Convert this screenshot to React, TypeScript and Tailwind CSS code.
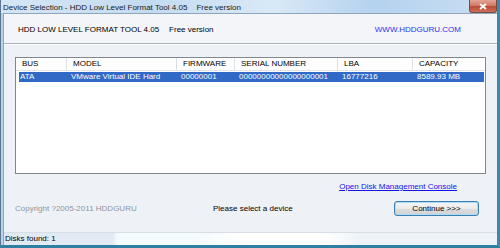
const columns = [
    { label: 'BUS', width: 'w-[51px]' },
    { label: 'MODEL', width: 'w-[110px]' },
    { label: 'FIRMWARE', width: 'w-[58px]' },
    { label: 'SERIAL NUMBER', width: 'w-[103px]' },
    { label: 'LBA', width: 'w-[75px]' },
    { label: 'CAPACITY', width: 'flex-1' },
];

const row = ['ATA', 'VMware Virtual IDE Hard', '00000001', '00000000000000000001', '16777216', '8589.93 MB'];

const App = () => {
    return (
        <div className="w-[500px] h-[248px] flex flex-col overflow-hidden bg-[#b9d3ec] border-l border-[#5d7690] border-r-[3px] border-r-[#3d88ad] border-b-[3px] border-b-[#2f7fa3] font-['Liberation_Sans',sans-serif] text-[8px] text-black leading-none">
            {/* title bar */}
            <div className="h-[13px] shrink-0 flex items-end relative bg-[linear-gradient(90deg,#d5e6f6_0%,#c3dbf1_30%,#d9e9f7_55%,#b5d2ee_75%,#c9dff3_100%)]">
                <span className="pl-[2px] pb-[1px] text-[8px] text-[#1a1a1a]">
                    Device Selection - HDD Low Level Format Tool 4.05
                    <span className="ml-[9px]">Free version</span>
                </span>
                <div className="absolute right-[0px] top-0 w-[28px] h-[13px] rounded-b-[3px] border border-t-0 border-[#7b4a44] bg-[linear-gradient(180deg,#e3a597_0%,#d27a68_45%,#bd4b36_55%,#c9705a_100%)] flex items-center justify-center">
                    <svg width="8" height="7" viewBox="0 0 8 7">
                        <path d="M1 1 L7 6 M7 1 L1 6" stroke="#fff" strokeWidth="1.8" />
                    </svg>
                </div>
            </div>

            <div className="flex-1 flex flex-col ml-[2px] border-l border-t border-[#8ea5bc] bg-[#eef1f5]">
                {/* header */}
                <div className="h-[30px] shrink-0 flex items-center pt-[2px] pl-[14px] pr-[36px] bg-[#f3f5f8] border-b border-b-[#a9b3be]">
                    <span>HDD LOW LEVEL FORMAT TOOL 4.05</span>
                    <span className="ml-[10px]">Free version</span>
                    <span className="ml-auto text-[#2f2ff5]">WWW.HDDGURU.COM</span>
                </div>
                <div className="h-px bg-white shrink-0" />

                {/* body */}
                <div className="flex-1 flex flex-col pt-[12px] pl-[11px] pr-[11px]">
                    <div className="h-[117px] bg-white border border-[#82878f] flex flex-col">
                        <div className="h-[13px] flex border-b border-[#e1e4e8]">
                            {columns.map((c, i) => (
                                <div
                                    key={c.label}
                                    className={`${c.width} flex items-center pl-[6px] ${i < columns.length - 1 ? 'border-r border-[#dcdfe3]' : ''}`}
                                >
                                    {c.label}
                                </div>
                            ))}
                        </div>
                        <div className="h-[10px] mt-[1px] ml-[3px] mr-px flex bg-[#3169c6] text-white">
                            {row.map((v, i) => (
                                <div
                                    key={i}
                                    className={`${i === 0 ? 'w-[48px]' : columns[i].width} flex items-center pl-[1px] ${i > 0 ? 'pl-[4px]' : ''}`}
                                >
                                    {v}
                                </div>
                            ))}
                        </div>
                    </div>

                    <div className="flex justify-end pr-[29px] mt-[9px]">
                        <span className="text-[#1515f0] underline">Open Disk Management Console</span>
                    </div>

                    <div className="flex items-center mt-[10px]">
                        <span className="text-[#8f969e] w-[198px] shrink-0">Copyright ?2005-2011 HDDGURU</span>
                        <span className="shrink-0">Please select a device</span>
                        <div className="flex-1" />
                        <button className="mr-[7px] shrink-0 w-[85px] min-w-[85px] h-[15px] rounded-[3px] border border-[#3c7fb1] bg-[linear-gradient(180deg,#f6f6f6_0%,#ebebeb_50%,#dddddd_51%,#d3d3d3_100%)] shadow-[inset_0_0_0_1px_#a6dcf5] text-[8px] flex items-center justify-center">
                            Continue &gt;&gt;&gt;
                        </button>
                    </div>
                </div>

                {/* status bar */}
                <div className="h-[13px] shrink-0 flex items-center pl-px border-t border-[#d7dee6] bg-[linear-gradient(90deg,#e1eaf3_0%,#e1eaf3_22%,#f4fbfd_23%,#f4fbfd_40%,#ffffff_48%,#ffffff_65%,#eef3f8_72%,#eef3f8_100%)]">
                    Disks found: 1
                </div>
            </div>
        </div>
    );
};

export default App;
